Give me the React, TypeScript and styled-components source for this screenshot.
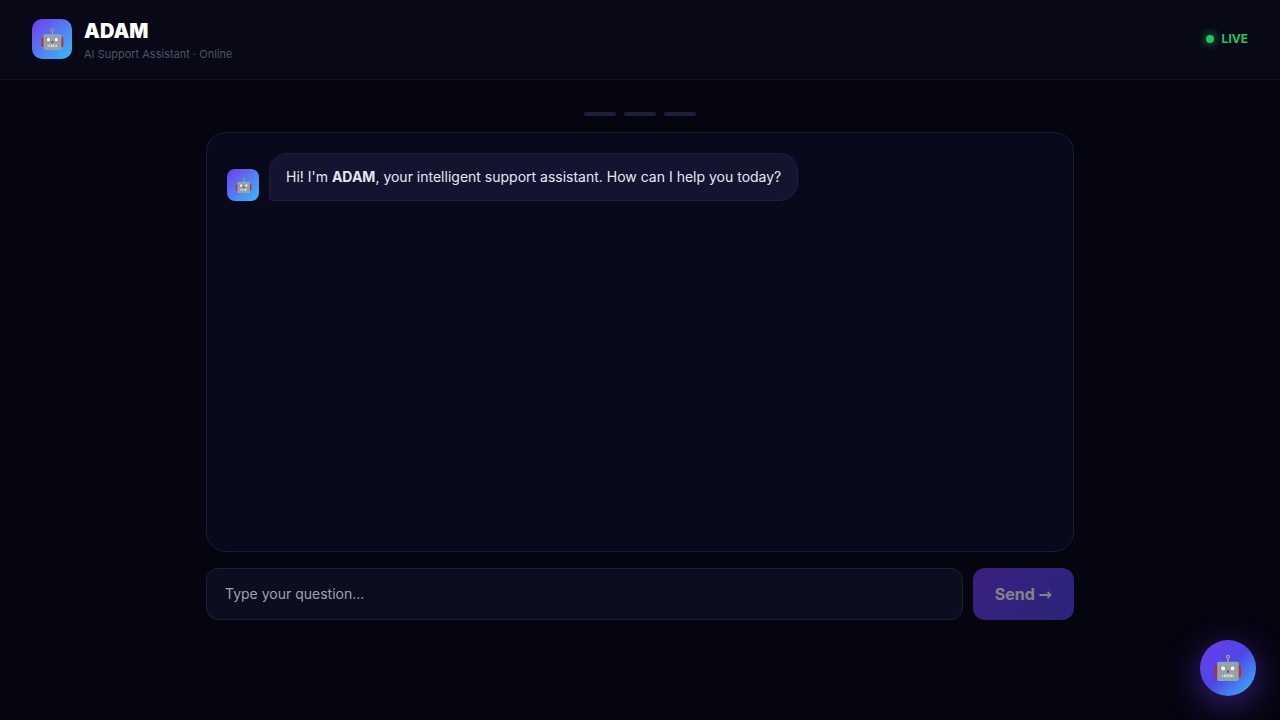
import React, { useState } from "react";
import styled, { createGlobalStyle } from "styled-components";

const GlobalStyle = createGlobalStyle`
  *, *::before, *::after { box-sizing: border-box; }
  body {
    margin: 0;
    min-height: 100vh;
    background: #050510;
    color: #e2e8f0;
    font-family: Inter, "DejaVu Sans", sans-serif;
  }
  button, input { font-family: inherit; }
`;

const Header = styled.header`
  display: flex;
  align-items: center;
  justify-content: space-between;
  padding: 18px 32px 19px;
  background: #080816;
  border-bottom: 1px solid #111126;
`;

const Brand = styled.div`
  display: flex;
  align-items: center;
  gap: 12px;
`;

const Avatar = styled.div<{ $size: number; $radius: number; $glyph: number }>`
  display: flex;
  flex-shrink: 0;
  align-items: center;
  justify-content: center;
  width: ${(p) => p.$size}px;
  height: ${(p) => p.$size}px;
  border-radius: ${(p) => p.$radius}px;
  background: linear-gradient(135deg, #703bee, #38bdf8);
  font-size: ${(p) => p.$glyph}px;
  line-height: 22px;
`;

const Title = styled.h1`
  margin: 0;
  color: #fff;
  font-size: 20px;
  font-weight: 900;
  line-height: 26px;
`;

const Subtitle = styled.p`
  margin: 4px 0 0;
  color: #4b5563;
  font-size: 11px;
  line-height: 12px;
`;

const Status = styled.div`
  display: flex;
  align-items: center;
  gap: 8px;
  color: #22c55e;
  font-size: 12px;
  font-weight: 700;
  line-height: 14px;
`;

const StatusDot = styled.span`
  width: 8px;
  height: 8px;
  border-radius: 50%;
  background: #22c55e;
  box-shadow: 0 0 10px #22c55e;
`;

const Main = styled.main`
  display: flex;
  flex-direction: column;
  gap: 16px;
  max-width: 900px;
  margin: 0 auto;
  padding: 32px 16px;
`;

const Steps = styled.div`
  display: flex;
  justify-content: center;
  gap: 8px;
`;

const Step = styled.span`
  width: 32px;
  height: 4px;
  border-radius: 2px;
  background: #1e1e3a;
`;

const ChatPanel = styled.section`
  height: 420px;
  padding: 20px;
  overflow-y: auto;
  border: 1px solid #1a1a3a;
  border-radius: 20px;
  background: #08091b;
`;

const Message = styled.div`
  display: flex;
  align-items: flex-end;
  gap: 10px;
`;

const Bubble = styled.p`
  margin: 0;
  padding: 12px 16px;
  border: 1px solid #201f3c;
  border-radius: 18px 18px 18px 4px;
  background: #151430;
  font-size: 14px;
  line-height: 22px;
`;

const Composer = styled.form`
  display: flex;
  gap: 10px;
`;

const QuestionInput = styled.input`
  flex: 1;
  min-width: 0;
  height: 52px;
  padding: 0 18px 2px;
  border: 1px solid #201f3a;
  border-radius: 12px;
  outline: none;
  background: #0c0d1f;
  color: #e2e8f0;
  font-size: 14px;
  &::placeholder { color: #9ca3af; }
`;

const SendButton = styled.button`
  padding: 0 22px;
  border: none;
  border-radius: 12px;
  background: linear-gradient(135deg, #703bee, #4f46e5);
  color: #fff;
  font-size: 16px;
  font-weight: 700;
  cursor: pointer;
  &:disabled { opacity: 0.5; cursor: default; }
`;

const Arrow = styled.span`
  font-family: "DejaVu Sans", sans-serif;
`;

const ChatLauncher = styled.button`
  position: fixed;
  right: 24px;
  bottom: 24px;
  display: flex;
  align-items: center;
  justify-content: center;
  width: 56px;
  height: 56px;
  padding: 0 0 2px;
  border: none;
  border-radius: 50%;
  background: linear-gradient(135deg, #703bee, #4f46e5 50%, #38bdf8);
  box-shadow: 0 8px 32px rgba(112, 59, 238, 0.5);
  font-size: 24px;
  cursor: pointer;
`;

export default function App() {
  const [question, setQuestion] = useState("");

  return (
    <>
      <GlobalStyle />
      <Header>
        <Brand>
          <Avatar $size={40} $radius={10} $glyph={20} aria-hidden="true">🤖</Avatar>
          <div>
            <Title>ADAM</Title>
            <Subtitle>AI Support Assistant · Online</Subtitle>
          </div>
        </Brand>
        <Status>
          <StatusDot />
          LIVE
        </Status>
      </Header>
      <Main>
        <Steps aria-hidden="true">
          <Step />
          <Step />
          <Step />
        </Steps>
        <ChatPanel aria-label="Conversation">
          <Message>
            <Avatar $size={32} $radius={8} $glyph={14} aria-hidden="true">🤖</Avatar>
            <Bubble>
              Hi! I'm <strong>ADAM</strong>, your intelligent support assistant. How can I help you today?
            </Bubble>
          </Message>
        </ChatPanel>
        <Composer onSubmit={(e) => e.preventDefault()}>
          <QuestionInput
            aria-label="Your question"
            placeholder="Type your question..."
            value={question}
            onChange={(e) => setQuestion(e.target.value)}
          />
          <SendButton type="submit" disabled={!question.trim()}>
            Send <Arrow>→</Arrow>
          </SendButton>
        </Composer>
      </Main>
      <ChatLauncher type="button" aria-label="Open chat">🤖</ChatLauncher>
    </>
  );
}
